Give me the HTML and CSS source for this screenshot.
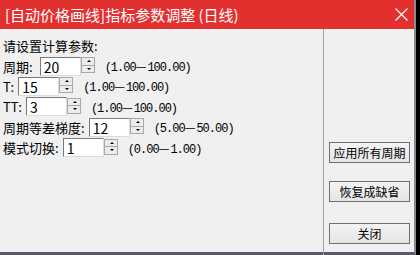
FILE: index.html
```html
<!DOCTYPE html>
<html lang="zh-CN">
<head>
    <meta charset="UTF-8">
    <meta name="viewport" content="width=device-width, initial-scale=1.0">
    <title>指标参数调整</title>
    <link rel="stylesheet" href="styles.css">
</head>
<body>
    <div class="dialog">
        <div class="titlebar">
            <span class="title">[自动价格画线]指标参数调整 (日线)</span>
            <svg class="close" width="13" height="13" viewBox="0 0 13 13">
                <path d="M0.5 0.5 L12.5 12.5 M12.5 0.5 L0.5 12.5" stroke="#fff" stroke-width="1.2" fill="none"/>
            </svg>
        </div>
        <div class="content">
            <div class="params">
                <div class="intro">请设置计算参数:</div>

                <div class="row">
                    <span class="label label-wide">周期:</span>
                    <span class="field">20</span>
                    <span class="spin"><span class="up"></span><span class="down"></span></span>
                    <span class="range">(1.00<span class="dash">—</span>100.00)</span>
                </div>
                <div class="row">
                    <span class="label">T:</span>
                    <span class="field">15</span>
                    <span class="spin"><span class="up"></span><span class="down"></span></span>
                    <span class="range">(1.00<span class="dash">—</span>100.00)</span>
                </div>
                <div class="row">
                    <span class="label">TT:</span>
                    <span class="field">3</span>
                    <span class="spin"><span class="up"></span><span class="down"></span></span>
                    <span class="range">(1.00<span class="dash">—</span>100.00)</span>
                </div>
                <div class="row">
                    <span class="label">周期等差梯度:</span>
                    <span class="field">12</span>
                    <span class="spin"><span class="up"></span><span class="down"></span></span>
                    <span class="range">(5.00<span class="dash">—</span>50.00)</span>
                </div>
                <div class="row">
                    <span class="label">模式切换:</span>
                    <span class="field">1</span>
                    <span class="spin"><span class="up"></span><span class="down"></span></span>
                    <span class="range">(0.00<span class="dash">—</span>1.00)</span>
                </div>
            </div>
            <div class="actions">
                <button type="button" class="btn">应用所有周期</button>
                <button type="button" class="btn">恢复成缺省</button>
                <button type="button" class="btn btn-close">关闭</button>
            </div>
        </div>
    </div>
</body>
</html>
```

FILE: styles.css
```css
body {
    margin: 0;
    padding: 0;
    background-color: #000;
    font-family: "Noto Sans CJK SC", "Liberation Sans", sans-serif;
    font-size: 13px;
    color: #000;
    overflow: hidden;
}
.dialog {
    width: 414px;
    height: 252px;
    background-color: #f0f0f0;
    border-right: 2px solid #8a8a94;
    border-bottom: 3px solid #5a5a66;
    display: flex;
    flex-direction: column;
}
.titlebar {
    height: 29px;
    background-color: #e2302f;
    color: #fff;
    display: flex;
    align-items: center;
    padding: 0 6px 0 5px;
    flex-shrink: 0;
}
.title {
    font-size: 15px;
    flex: 1;
    white-space: nowrap;
}
.close {
    flex-shrink: 0;
    margin-top: -1px;
}
.content {
    flex: 1;
    display: flex;
}
.params {
    width: 320px;
    border-right: 1px solid #a0a0a0;
    padding: 9px 0 0 3px;
}
.intro {
    height: 18px;
    line-height: 16px;
}
.row {
    display: flex;
    align-items: center;
    height: 20px;
    margin-bottom: 0.4px;
}
.label {
    margin-right: 4px;
    white-space: nowrap;
}
.label-wide {
    margin-right: 7px;
}
.field {
    width: 36px;
    height: 17px;
    background: #fff;
    border: 1px solid;
    border-color: #7a7a7a #dcdcdc #dcdcdc #7a7a7a;
    font-size: 14px;
    line-height: 18px;
    padding-left: 3px;
}
.spin {
    display: flex;
    flex-direction: column;
    align-self: flex-start;
    width: 14px;
    height: 16px;
    margin-top: 1px;
}
.spin span {
    flex: 1;
    border: 1px solid #a8a8a8;
    background: #ececec;
    position: relative;
}
.spin .down {
    border-top: none;
}
.spin span::after {
    content: "";
    position: absolute;
    left: 5px;
    border-left: 2px solid transparent;
    border-right: 2px solid transparent;
}
.spin .up::after {
    top: 2px;
    border-bottom: 2px solid #000;
}
.spin .down::after {
    top: 2px;
    border-top: 2px solid #000;
}
.range {
    margin-left: 10px;
    font-family: "Liberation Mono", monospace;
    font-size: 12px;
    letter-spacing: -1px;
    color: #000;
}
.dash {
    font-family: "Noto Sans CJK SC", sans-serif;
    letter-spacing: 0;
    padding-right: 1px;
}
.actions {
    flex: 1;
    display: flex;
    flex-direction: column;
    padding: 113px 0 0 5px;
}
.btn {
    width: 81px;
    height: 21px;
    padding: 0;
    border: 1px solid #707070;
    background: linear-gradient(#f4f4f4, #e4e4e4);
    font-family: "Noto Sans CJK SC", sans-serif;
    font-size: 12px;
    line-height: 17px;
    color: #000;
    margin-bottom: 18px;
}
.btn-close {
    margin-top: 3px;
}
```
